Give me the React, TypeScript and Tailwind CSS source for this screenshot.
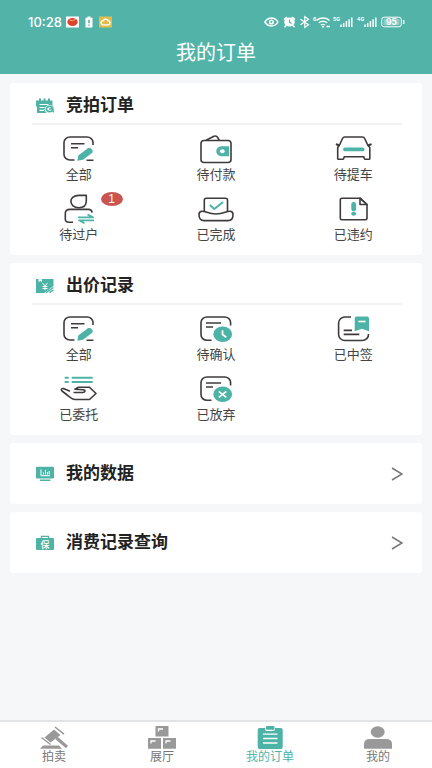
import type { ReactNode } from "react";

const TEAL = "#4db3a6";
const INK = "#3f3b3c";

type Item = { label: string; icon: ReactNode; badge?: number };

function ItemIcon({ children }: { children: ReactNode }) {
  return (
    <svg
      viewBox="0 0 36 30"
      className="h-[30px] w-9 overflow-visible"
      fill="none"
      stroke={INK}
      strokeWidth="1.6"
      strokeLinejoin="round"
      aria-hidden="true"
    >
      {children}
    </svg>
  );
}

function TitleIcon({ children }: { children: ReactNode }) {
  return (
    <svg viewBox="0 0 18 16" className="h-4 w-[18px] shrink-0" fill={TEAL} aria-hidden="true">
      {children}
    </svg>
  );
}

const allIcon = (
  <ItemIcon>
    <path d="M32 11V8.5A6 5.500 0 0 0 26 3H9A6 5.500 0 0 0 3 8.500V20.500A6 5.500 0 0 0 9 26H13.500" />
    <path d="M10 9.800H23.500M10 13.800H17M25.500 26.300H32.500" />
    <path d="M16.300 26.700L17.300 21.500L26.500 14.500C28.800 13 33 15.500 31.300 18.800L22 25.700Z" fill={TEAL} stroke="none" />
  </ItemIcon>
);

const walletIcon = (
  <ItemIcon>
    <rect x="3" y="6.500" width="30" height="22" rx="3" />
    <path d="M8 6.300L16 2.300C17.500 1.700 19 2.300 19.700 3.500L21.300 6.300" />
    <path d="M31 12.300V22.300H23.500C16.500 22.300 16.500 12.300 23.500 12.300Z" fill={TEAL} stroke="none" />
    <ellipse cx="24.300" cy="17.300" rx="2.400" ry="2" fill="#fff" stroke="none" />
  </ItemIcon>
);

const carIcon = (
  <ItemIcon>
    <path d="M2.700 13.500L4.500 11L7.500 4.500C8 3.500 8.700 3 9.700 3H27.500C28.500 3 29.200 3.500 29.700 4.500L32.700 11L34.800 13.500V24.500Q34.800 25.300 34 25.300H30.300Q29.500 25.300 29.300 24.500L28.800 22.700H9.200L8.700 24.500Q8.500 25.300 7.700 25.300H3.500Q2.700 25.300 2.700 24.500Z" />
    <path d="M1.800 10.500L4 11.200M35.700 10.500L33.500 11.200" strokeWidth="2.200" strokeLinecap="round" />
    <path d="M10 15.400H27.500" stroke={TEAL} strokeWidth="3.800" strokeLinecap="round" />
  </ItemIcon>
);

const transferIcon = (
  <ItemIcon>
    <path d="M25.300 1.400H18C6.500 1.400 8 13.700 17.700 13.700C23 13.700 25.300 11 25.300 7Z" />
    <path d="M31.200 18.500C30.800 16.500 29.500 15.400 27.500 15.400H9C6 15.400 4.300 17 4.300 19.500V25C4.300 27 5.500 28.300 8 28.300H12" />
    <path d="M17 23.400H32L26.500 20.500M33 26.300H18L23.500 29.300" stroke={TEAL} strokeWidth="1.800" />
  </ItemIcon>
);

const doneIcon = (
  <ItemIcon>
    <path d="M6.300 17V6.300Q6.300 4.300 8.300 4.300H27.500Q29.500 4.300 29.500 6.300V17" />
    <path d="M4 17.200C8 17.200 10.500 20 18 20C25.500 20 28 17.200 32 17.200C34 17.200 35 18.500 35 20.500C35 24.500 33.500 26.600 30 26.600H6C2.500 26.600 1 24.500 1 20.500C1 18.500 2 17.200 4 17.200Z" />
    <path d="M11.800 11L16.300 15L25 8" stroke={TEAL} strokeWidth="2" />
  </ItemIcon>
);

const breachIcon = (
  <ItemIcon>
    <path d="M7 4.200H25L32 10.500V24Q32 25.700 30.300 25.700H7Q5.300 25.700 5.300 24V5.900Q5.300 4.200 7 4.200Z" />
    <path d="M25 4.200V10.500H32Z" />
    <rect x="16.300" y="8" width="4.800" height="9.300" rx="2.400" fill={TEAL} stroke="none" />
    <ellipse cx="18.700" cy="19.800" rx="2.500" ry="2" fill={TEAL} stroke="none" />
  </ItemIcon>
);

// Card outline with a round status mark over its lower right corner
function StatusCard({ children }: { children: ReactNode }) {
  return (
    <ItemIcon>
      <path d="M32.600 11.500V8.500A6 5.500 0 0 0 26.600 3H9A6 5.500 0 0 0 3 8.500V20.500A6 5.500 0 0 0 9 26.300H13.500" />
      <path d="M8 9H23M8 13H15" />
      <ellipse cx="24.700" cy="20.300" rx="9.400" ry="7.700" fill={TEAL} stroke="none" />
      {children}
    </ItemIcon>
  );
}

const confirmIcon = (
  <StatusCard>
    <path d="M24.500 16.300V20.500L28.300 23.300" stroke="#fff" strokeWidth="1.700" />
  </StatusCard>
);

const abandonedIcon = (
  <StatusCard>
    <path d="M20.800 17.300L28.300 23.300M28.300 17.300L20.800 23.300" stroke="#fff" strokeWidth="1.700" />
  </StatusCard>
);

const wonIcon = (
  <ItemIcon>
    <path d="M16 3H10A6.500 6 0 0 0 3.600 9V20.500A6.500 6 0 0 0 10 26.500H27A6.500 6 0 0 0 33.500 20" />
    <path d="M8.700 16.400H17M8.700 20.400H24.300" />
    <path d="M21.700 2.500H32Q34 2.500 34 4.500V17.200L26.900 14.800L19.700 17.200V4.500Q19.700 2.500 21.700 2.500Z" fill={TEAL} stroke="none" />
    <path d="M23.300 7.500H30.500" stroke="#fff" />
  </ItemIcon>
);

const entrustIcon = (
  <ItemIcon>
    <path d="M3.700 3.800H7.700M10.700 3.800H31.700M3.700 8H7.700M10.700 8H31.700" stroke={TEAL} strokeWidth="1.900" />
    <path d="M12.500 18.500H21.500C24.500 18.300 25 16 22 15.700L14 15.300L17.500 13.200H28.500L35 19.500L28.500 25.500H14C11 25.500 8.500 22.700 5.500 20.500L1 17C-0.500 15.500 0.500 14.300 2.500 14.600L9 17.300" />
  </ItemIcon>
);

const auctionOrders: Item[] = [
  { label: "全部", icon: allIcon },
  { label: "待付款", icon: walletIcon },
  { label: "待提车", icon: carIcon },
  { label: "待过户", icon: transferIcon, badge: 1 },
  { label: "已完成", icon: doneIcon },
  { label: "已违约", icon: breachIcon },
];

const bidRecords: Item[] = [
  { label: "全部", icon: allIcon },
  { label: "待确认", icon: confirmIcon },
  { label: "已中签", icon: wonIcon },
  { label: "已委托", icon: entrustIcon },
  { label: "已放弃", icon: abandonedIcon },
];

const calendarIcon = (
  <TitleIcon>
    <path d="M0 2.500H3V.5H5V2.500H7.500V.5H9.500V2.500H12V.5H14V2.500H16.500V8.500H15V15H1V8.500H0Z" />
    <path d="M3.500 6.500H12.500M3.500 9.500H8.500M3.500 12.300H8" stroke="#fff" strokeWidth="1.200" />
    <ellipse cx="13.600" cy="11.300" rx="5" ry="4.300" fill="#fff" />
    <ellipse cx="13.600" cy="11" rx="3.300" ry="2.600" fill="none" stroke={TEAL} strokeWidth="1.700" />
    <path d="M13 11.300L16 10.500L17.700 14.500" fill="none" stroke={TEAL} strokeWidth="1.400" />
  </TitleIcon>
);

const bidIcon = (
  <TitleIcon>
    <path d="M0 1H2.500V4L4.500 3L6 4V1H17.500V8L8 15H0Z" />
    <path d="M6.500 5L9 8L11.500 5M9 8V12M6.500 8.500H11.500M6.500 10.500H11.500" fill="none" stroke="#fff" strokeWidth="1" />
    <path d="M10 14.700L17.500 9.500M13.500 14.700L17.500 12" stroke={TEAL} strokeWidth="1.500" />
  </TitleIcon>
);

const dataIcon = (
  <TitleIcon>
    <path d="M1 .8H17Q18 .8 18 1.800V11.500Q18 12.500 17 12.500H1Q0 12.500 0 11.500V1.800Q0 .8 1 .8ZM4 13.500H14.500V15H4Z" />
    <path d="M5 3.500V9.700H14M7.500 8.500V6.500M9.500 8.500V4M11.500 8.500V6M13.200 8.500V5" fill="none" stroke="#fff" strokeWidth="1" />
  </TitleIcon>
);

const insuredIcon = (
  <svg viewBox="0 0 18 16" className="h-4 w-[18px] shrink-0" aria-hidden="true">
    <path d="M5.500 3V1.300H12.500V3" fill="none" stroke={TEAL} strokeWidth="1.300" />
    <rect x="0" y="3" width="18" height="12" rx="1" fill={TEAL} />
    <text x="9" y="12.500" textAnchor="middle" fontSize="9" fontWeight="500" fill="#fff">
      保
    </text>
  </svg>
);

function StatusBar() {
  return (
    <div className="flex h-5 items-center justify-between pl-7 pr-[26px] font-['Inter','Liberation_Sans',sans-serif]">
      <div className="flex items-center">
        <span className="text-[13px] font-medium leading-5">10:28</span>
        <svg viewBox="0 0 46 12" className="ml-1 h-3 w-[46px]" aria-hidden="true">
          <rect x="0" y=".5" width="13" height="11" fill="#fff" />
          <ellipse cx="6.500" cy="6" rx="5.200" ry="4" fill="#d9452b" />
          <path d="M3.500 4Q6.500 5.500 9.500 3.500" fill="none" stroke="#f6b08d" />
          <path d="M21.500 .5H24.500V1.700H26.500V11.500H19.500V1.700H21.500Z" fill="#fff" />
          <path d="M23 3.700V7.300M23 8.500V9.800" stroke="#3c8f86" strokeWidth="1.200" />
          <rect x="33" y=".5" width="13" height="11" fill="#e3bd4c" />
          <path d="M36.500 8.700C34 7.500 35 4.500 37.500 4.500C38.500 2.500 41.500 2.700 42 4.500C44.500 5 44.800 8 42.500 8.900Z" fill="none" stroke="#fff" strokeWidth="1.400" />
        </svg>
      </div>
      <svg viewBox="0 0 142 14" className="h-3.5 w-[142px]" fill="none" stroke="#fff" aria-hidden="true">
        <path d="M.8 7Q3.500 3 7.500 3T14 7Q11.500 11 7.500 11T.8 7Z" strokeWidth="1.400" />
        <circle cx="7.400" cy="7" r="2.600" fill="#fff" stroke="none" />
        <circle cx="7.400" cy="7" r="1" fill="#52b4a9" stroke="none" />
        <ellipse cx="25.500" cy="7" rx="5.300" ry="4.600" fill="#fff" stroke="none" />
        <path d="M20 4.500L23 2M31 4.500L28 2M22 10.500L20.500 12.300M29 10.500L30.500 12.300" strokeWidth="1.600" />
        <path d="M25.500 4.500V7.300L27.500 8.500" stroke="#52b4a9" strokeWidth="1.200" />
        <path d="M36.500 4.300L44.500 9.800L40.800 12.300V1.700L44.500 4.300L36.500 9.800" strokeWidth="1.200" />
        <text x="49" y="5.500" fontSize="5" fontWeight="700" fill="#fff" stroke="none">6</text>
        <path d="M52.500 5.300Q59 .8 65.500 5.300M54.800 7.800Q59 4.800 63.200 7.800M57 10Q59 8.700 61 10" strokeWidth="1.400" />
        <path d="M58 11.700H60M62.500 11.500H66" strokeWidth="1.400" />
        <text x="69" y="5.500" fontSize="5" fontWeight="700" fill="#fff" stroke="none">5G</text>
        <path d="M77 12V9.500M79.700 12V8M82.400 12V6M85.100 12V4.200M87.800 12V2.500" strokeWidth="1.500" />
        <text x="93" y="5.500" fontSize="5" fontWeight="700" fill="#fff" stroke="none">4G</text>
        <path d="M101 12V9.500M103.700 12V8M106.400 12V6M109.100 12V4.200M111.800 12V2.500" strokeWidth="1.500" />
        <rect x="117.700" y="2.200" width="19.600" height="9.600" rx="2.500" strokeWidth="1" />
        <rect x="119.500" y="3.800" width="16" height="6.400" rx="1" fill="#fff" fillOpacity=".35" stroke="none" />
        <path d="M139.700 5V9" strokeWidth="1.500" />
        <text x="127.500" y="10" textAnchor="middle" fontSize="8.500" fontWeight="700" fill="#fff" stroke="none">95</text>
      </svg>
    </div>
  );
}

function MenuCard({ title, icon, items }: { title: string; icon: ReactNode; items: Item[] }) {
  return (
    <section className="rounded-[3px] bg-white pb-[9px]">
      <div className="ml-[22px] mr-5 flex h-[42px] items-center gap-3 border-b-2 border-[#f3f3f4] pl-1 pt-1.5">
        {icon}
        <h2 className="text-[17px] font-bold leading-6 text-[#222]">{title}</h2>
      </div>
      <div className="grid grid-cols-3 gap-y-2 pt-[9px]">
        {items.map((item) => (
          <button key={item.label} type="button" className="flex flex-col items-center">
            <span className="relative">
              {item.icon}
              {item.badge && (
                <span className="absolute -top-0.5 left-10 h-3.5 w-[22px] rounded-[50%] bg-[#c95450] text-xs leading-[14px] text-white">
                  {item.badge}
                </span>
              )}
            </span>
            <span className="text-[13px] leading-[22px] text-[#444]">{item.label}</span>
          </button>
        ))}
      </div>
    </section>
  );
}

function LinkCard({ title, icon }: { title: string; icon: ReactNode }) {
  return (
    <a href="#" className="flex h-[61px] items-center gap-3 rounded-[3px] bg-white pl-[26px] pr-[19px]">
      {icon}
      <span className="flex-1 text-[17px] font-bold leading-6 text-[#222]">{title}</span>
      <svg viewBox="0 0 12 14" className="h-3.5 w-3" fill="none" stroke="#777" strokeWidth="1.500" aria-hidden="true">
        <path d="M1 1L11 7L1 13" />
      </svg>
    </a>
  );
}

const tabs = [
  {
    label: "拍卖",
    icon: (
      <>
        <path d="M4.500 11.500L14 3.500L20.500 9L10.500 16.500Z" />
        <path d="M15 1L24 8.200M1.500 11.500L10.500 18.500" fill="none" stroke="currentColor" strokeWidth="1.500" />
        <path d="M16.500 12L27 21" fill="none" stroke="currentColor" strokeWidth="3.200" />
        <path d="M3 19.500H19L22 22.700H0Z" />
      </>
    ),
  },
  {
    label: "展厅",
    icon: (
      <>
        <path d="M7.500 0H20.500V10.500H7.500ZM0 12H13V22.700H0ZM15 12H28V22.700H15Z" />
        <path d="M10.500 5.500V3H15M3 17.500V15H7.500M18 17.500V15H22.500" fill="none" stroke="#fff" strokeWidth="1.300" />
      </>
    ),
  },
  {
    label: "我的订单",
    active: true,
    icon: (
      <>
        <rect x="1.700" y="2" width="25" height="21" rx="2" />
        <path d="M9 0H19V3Q19 5 17 5H11Q9 5 9 3Z" fill="#fff" />
        <rect x="10" y="0" width="8.500" height="3.700" rx="1" />
        <path d="M7 8.200H21.500M7 12.500H21.500M7 17H21.500" fill="none" stroke="#fff" strokeWidth="1.300" />
      </>
    ),
  },
  {
    label: "我的",
    icon: (
      <>
        <ellipse cx="13.700" cy="6" rx="7" ry="5.700" />
        <path d="M0 22.700V18Q0 13 6 13H22Q28 13 28 18V22.700Z" />
      </>
    ),
  },
];

export default function App() {
  return (
    <div className="flex min-h-screen flex-col bg-[#f6f7f9] font-['Liberation_Sans','Noto_Sans_CJK_SC',sans-serif]">
      <header className="bg-[#52b4a9] pt-3 text-white">
        <StatusBar />
        <h1 className="text-center text-xl leading-[42px]">我的订单</h1>
      </header>

      <main className="flex flex-1 flex-col gap-2 px-[10px] pb-4 pt-[9px]">
        <MenuCard title="竞拍订单" icon={calendarIcon} items={auctionOrders} />
        <MenuCard title="出价记录" icon={bidIcon} items={bidRecords} />
        <LinkCard title="我的数据" icon={dataIcon} />
        <LinkCard title="消费记录查询" icon={insuredIcon} />
      </main>

      <nav className="grid grid-cols-4 border-t-2 border-[#e2e3e5] bg-white pb-1 pt-1">
        {tabs.map((tab) => (
          <a
            key={tab.label}
            href="#"
            aria-current={tab.active ? "page" : undefined}
            className={`flex flex-col items-center ${tab.active ? "text-[#4db3a6]" : "text-[#999]"}`}
          >
            <svg viewBox="0 0 28 24" className="h-6 w-7" fill="currentColor" aria-hidden="true">
              {tab.icon}
            </svg>
            <span className={`text-xs leading-[14px] ${tab.active ? "" : "text-[#777]"}`}>{tab.label}</span>
          </a>
        ))}
      </nav>
    </div>
  );
}
